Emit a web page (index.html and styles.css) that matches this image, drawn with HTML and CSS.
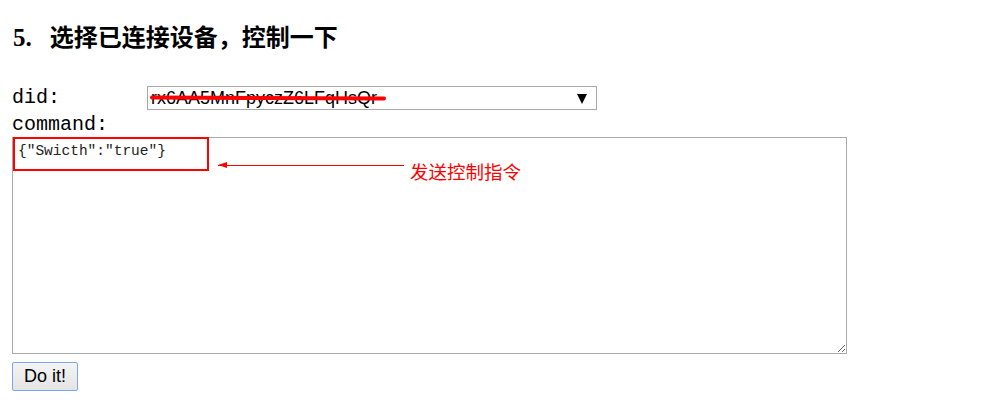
FILE: index.html
```html
<!DOCTYPE html>
<html lang="zh-CN">
<head>
    <meta charset="UTF-8">
    <title>控制设备</title>
    <link rel="stylesheet" href="styles.css">
</head>
<body>

    <h3 class="step-title"><span class="step-no">5.</span>选择已连接设备，控制一下</h3>

    <div class="device-row">
        <span class="field-label">did:</span>
        <span class="select-wrap">
            <select class="device-select">
                <option>rx6AA5MnFpyczZ6LFqHsQr</option>
            </select>
            <!-- 涂掉设备号 -->
            <span class="redact"></span>
        </span>
    </div>

    <div class="field-label command-label">command:</div>
    <div class="command-box">
        <textarea class="command-input" spellcheck="false">{"Swicth":"true"}</textarea>
        <span class="mark-box"></span>
        <span class="mark-arrow"></span>
        <span class="mark-note">发送控制指令</span>
    </div>

    <button class="do-button">Do it!</button>

</body>
</html>
```

FILE: styles.css
```css
/* --- 基础 --- */
body {
    margin: 0;
    padding: 0 12px;
    background: #fff;
    color: #000;
    font-family: "Liberation Serif", "Noto Sans CJK SC", serif;
}

.step-title {
    margin: 0;
    padding-top: 24px;
    height: 62px;
    box-sizing: border-box;
    font-size: 24px;
    font-weight: bold;
    line-height: 28px;
    padding-left: 1px;
}

.step-no {
    font-size: 25px;
    margin-right: 18px;
}

/* --- 设备选择 --- */
.device-row {
    display: flex;
    align-items: center;
    height: 24px;
    margin-top: 24px;
}

.field-label {
    font-family: "Liberation Mono", "Noto Sans CJK SC", monospace;
    font-size: 20px;
    line-height: 24px;
}

.device-row .field-label {
    width: 135px;
}

.command-label {
    margin-top: 3px;
}

.select-wrap {
    position: relative;
    display: inline-block;
}

.device-select {
    width: 450px;
    height: 24px;
    border: 1px solid #a9a9a9;
    border-radius: 0;
    background: #fff;
    font-family: "Liberation Sans", Arial, sans-serif;
    font-size: 18px;
    padding: 0 3px;
    appearance: none;
    -webkit-appearance: none;
}

.select-wrap::after {
    content: "";
    position: absolute;
    right: 10px;
    top: 8px;
    border-left: 5px solid transparent;
    border-right: 5px solid transparent;
    border-top: 10px solid #000;
    pointer-events: none;
}

.redact {
    position: absolute;
    left: 3px;
    top: 10px;
    width: 236px;
    height: 4px;
    border-radius: 3px;
    background: #f00;
    transform: rotate(0.3deg);
}

/* --- 指令输入 --- */
.command-box {
    position: relative;
    width: 835px;
    height: 217px;
}

.command-input {
    display: block;
    width: 835px;
    height: 217px;
    box-sizing: border-box;
    margin: 0;
    border: 1px solid #a9a9a9;
    padding: 5px 5px;
    font-family: "Liberation Mono", "Noto Sans CJK SC", monospace;
    font-size: 14.5px;
    line-height: 17px;
    color: #222;
    resize: both;
}

.mark-box {
    position: absolute;
    left: 1px;
    top: 0;
    width: 192px;
    height: 30px;
    border: 2px solid #f00;
}

.mark-arrow {
    position: absolute;
    left: 206px;
    top: 28px;
    width: 186px;
    height: 1px;
    background: #f00;
}

.mark-arrow::before {
    content: "";
    position: absolute;
    left: 0;
    top: -3px;
    border-top: 3.5px solid transparent;
    border-bottom: 3.5px solid transparent;
    border-right: 9px solid #f00;
}

.mark-note {
    position: absolute;
    left: 398px;
    top: 23px;
    color: #f00;
    font-family: "Noto Sans CJK SC", sans-serif;
    font-size: 18.5px;
    line-height: 22px;
}

/* --- 按钮 --- */
.do-button {
    margin-top: 8px;
    width: 66px;
    height: 29px;
    font-family: "Liberation Sans", Arial, sans-serif;
    font-size: 18px;
    background: linear-gradient(#f4f4f4, #e4e4e4);
    border: 1px solid #7aa7e6;
    border-radius: 2px;
    color: #000;
}
```
